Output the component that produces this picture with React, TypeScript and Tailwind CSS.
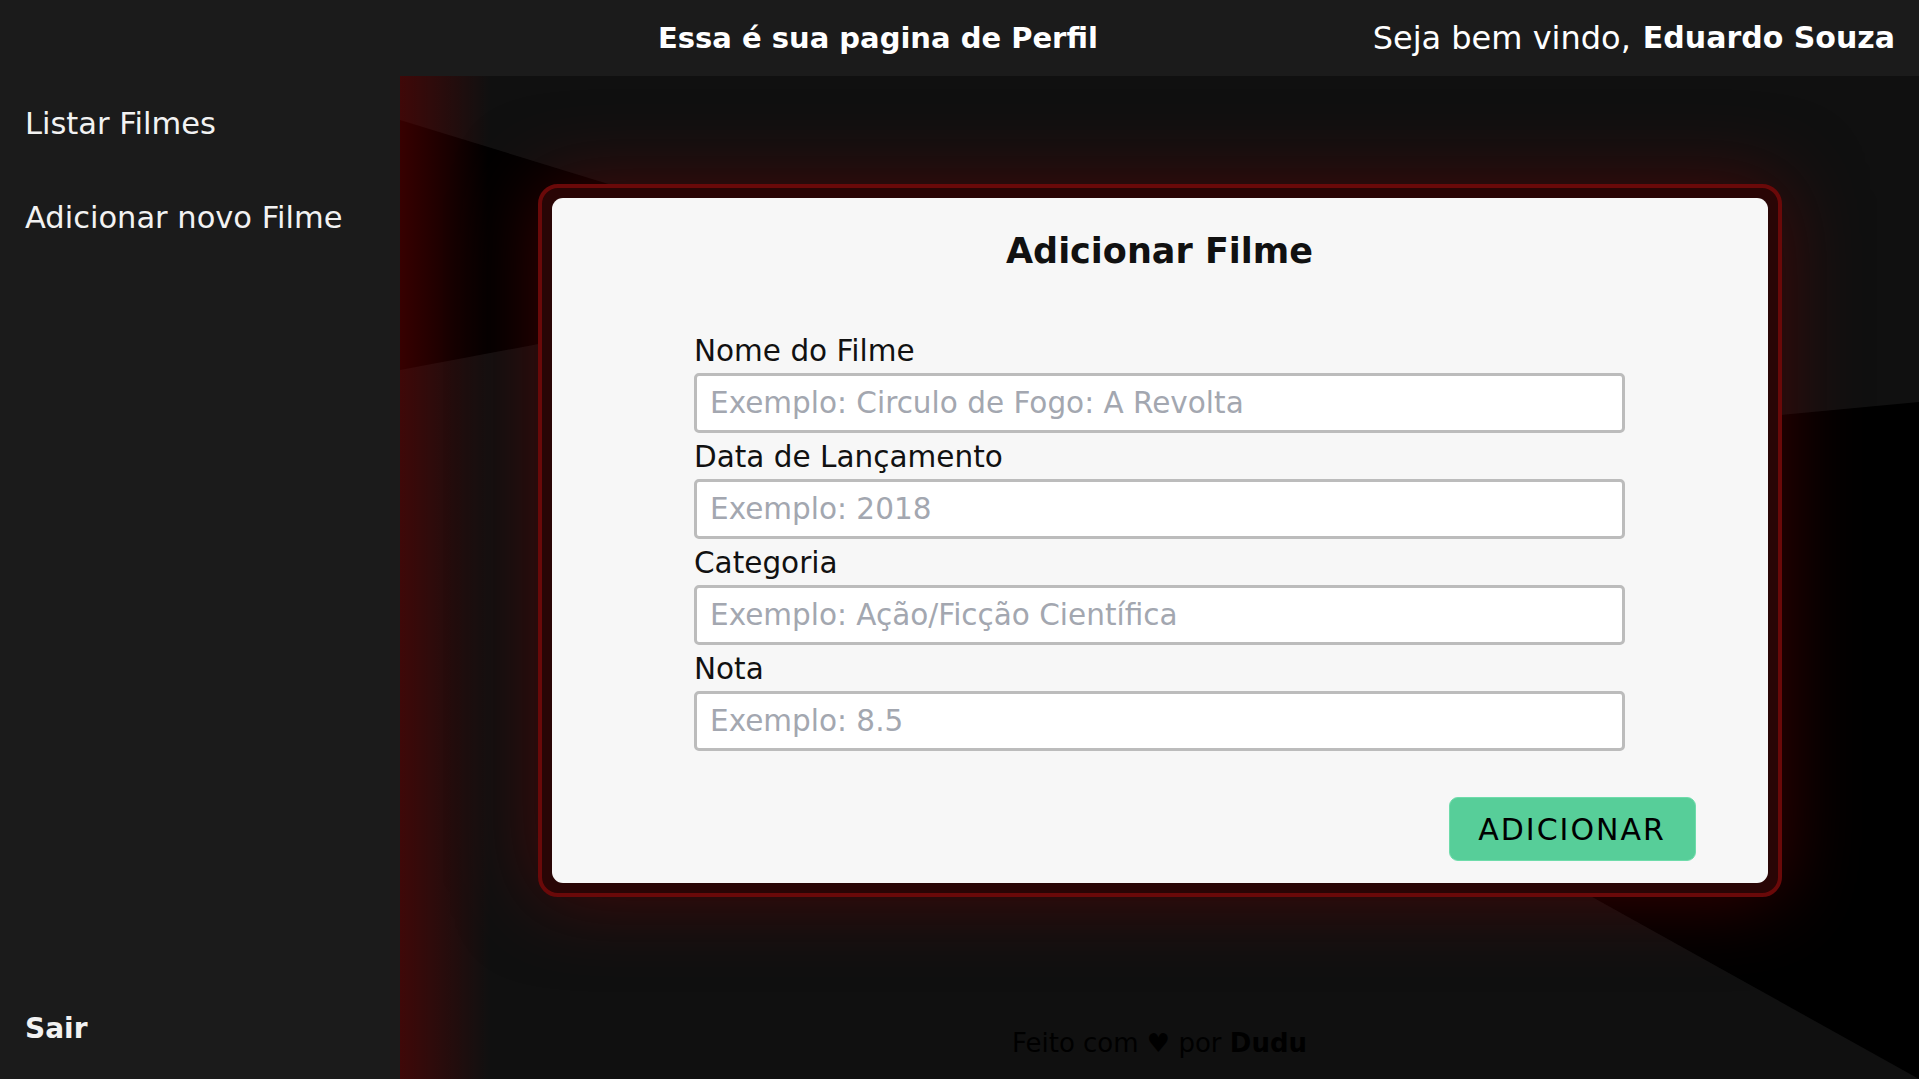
import React from "react";

const font = { fontFamily: '"DejaVu Sans", "Noto Sans", sans-serif' };

function Field({ label, placeholder }: { label: string; placeholder: string }) {
  return (
    <div className="flex flex-col mb-[2px]">
      <label className="h-[44px] leading-[44px] text-[29.5px] text-[#111]">{label}</label>
      <input
        placeholder={placeholder}
        className="h-[60px] w-full rounded-[5px] border-[3px] border-[#bcbcbc] bg-white pl-[13px] text-[29.5px] text-[#222] outline-none placeholder:text-[#a3a7b0]"
        style={font}
      />
    </div>
  );
}

function Background() {
  return (
    <svg className="absolute inset-0 h-full w-full" viewBox="0 0 1519 1003" preserveAspectRatio="none">
      <polygon points="0,44 505,199 0,294" fill="#000" />
      <polygon points="479,424 1519,326 1519,1003" fill="#000" />
    </svg>
  );
}

export default function App() {
  return (
    <div className="flex h-[1079px] w-full flex-col overflow-hidden bg-[#1b1b1b] text-white" style={font}>
      <header className="flex h-[76px] shrink-0 items-center bg-[#1b1b1b]">
        <h1 className="ml-[658px] text-[29px] font-bold leading-none">Essa é sua pagina de Perfil</h1>
        <div className="ml-auto mr-[24px] flex items-center text-[32px] leading-none">
          <span>Seja bem vindo,</span>
          <span className="ml-[12px] text-[30px] font-bold">Eduardo Souza</span>
        </div>
      </header>

      <div className="flex flex-1">
        <aside className="flex w-[400px] shrink-0 flex-col bg-[#1b1b1b] pl-[25px] pt-[28px] pb-[30px]">
          <a className="h-[40px] leading-[40px] text-[30.5px] text-[#f2f2f2]">Listar Filmes</a>
          <a className="mt-[54px] h-[40px] leading-[40px] text-[30.5px] text-[#f2f2f2]">Adicionar novo Filme</a>
          <a className="mt-auto h-[40px] leading-[40px] text-[28px] font-bold text-[#f2f2f2]">Sair</a>
        </aside>

        <main className="relative flex flex-1 flex-col items-center overflow-hidden bg-[#101010] pt-[108px]">
          <Background />
          <div className="absolute left-0 top-0 bottom-0 w-[90px] bg-[linear-gradient(to_right,rgba(110,0,0,0.5),rgba(110,0,0,0))]" />

          <div className="relative z-10 rounded-[20px] border-4 border-[#6a0909] bg-[#290505] p-[10px] shadow-[0_0_80px_rgba(110,0,0,0.55)]">
            <div className="flex h-[685px] w-[1216px] flex-col rounded-[11px] bg-[#f7f7f7] pt-[30px]">
              <h2 className="text-center text-[35px] font-bold leading-[46px] text-[#111]">Adicionar Filme</h2>
              <form className="mt-[55px] w-[931px] self-center">
                <Field label="Nome do Filme" placeholder="Exemplo: Circulo de Fogo: A Revolta" />
                <Field label="Data de Lançamento" placeholder="Exemplo: 2018" />
                <Field label="Categoria" placeholder="Exemplo: Ação/Ficção Científica" />
                <Field label="Nota" placeholder="Exemplo: 8.5" />
              </form>
              <div className="mt-[44px] flex justify-end pr-[72px]">
                <button
                  type="button"
                  className="h-[64px] w-[247px] rounded-[9px] border border-[#6fdcab] bg-[#57ce99] text-[30px] tracking-[2px] text-black"
                  style={font}
                >
                  ADICIONAR
                </button>
              </div>
            </div>
          </div>

          <footer className="relative z-10 mt-auto pb-[18px] text-[26px] leading-[36px] text-black">
            Feito com ♥ por <span className="font-bold">Dudu</span>
          </footer>
        </main>
      </div>
    </div>
  );
}
